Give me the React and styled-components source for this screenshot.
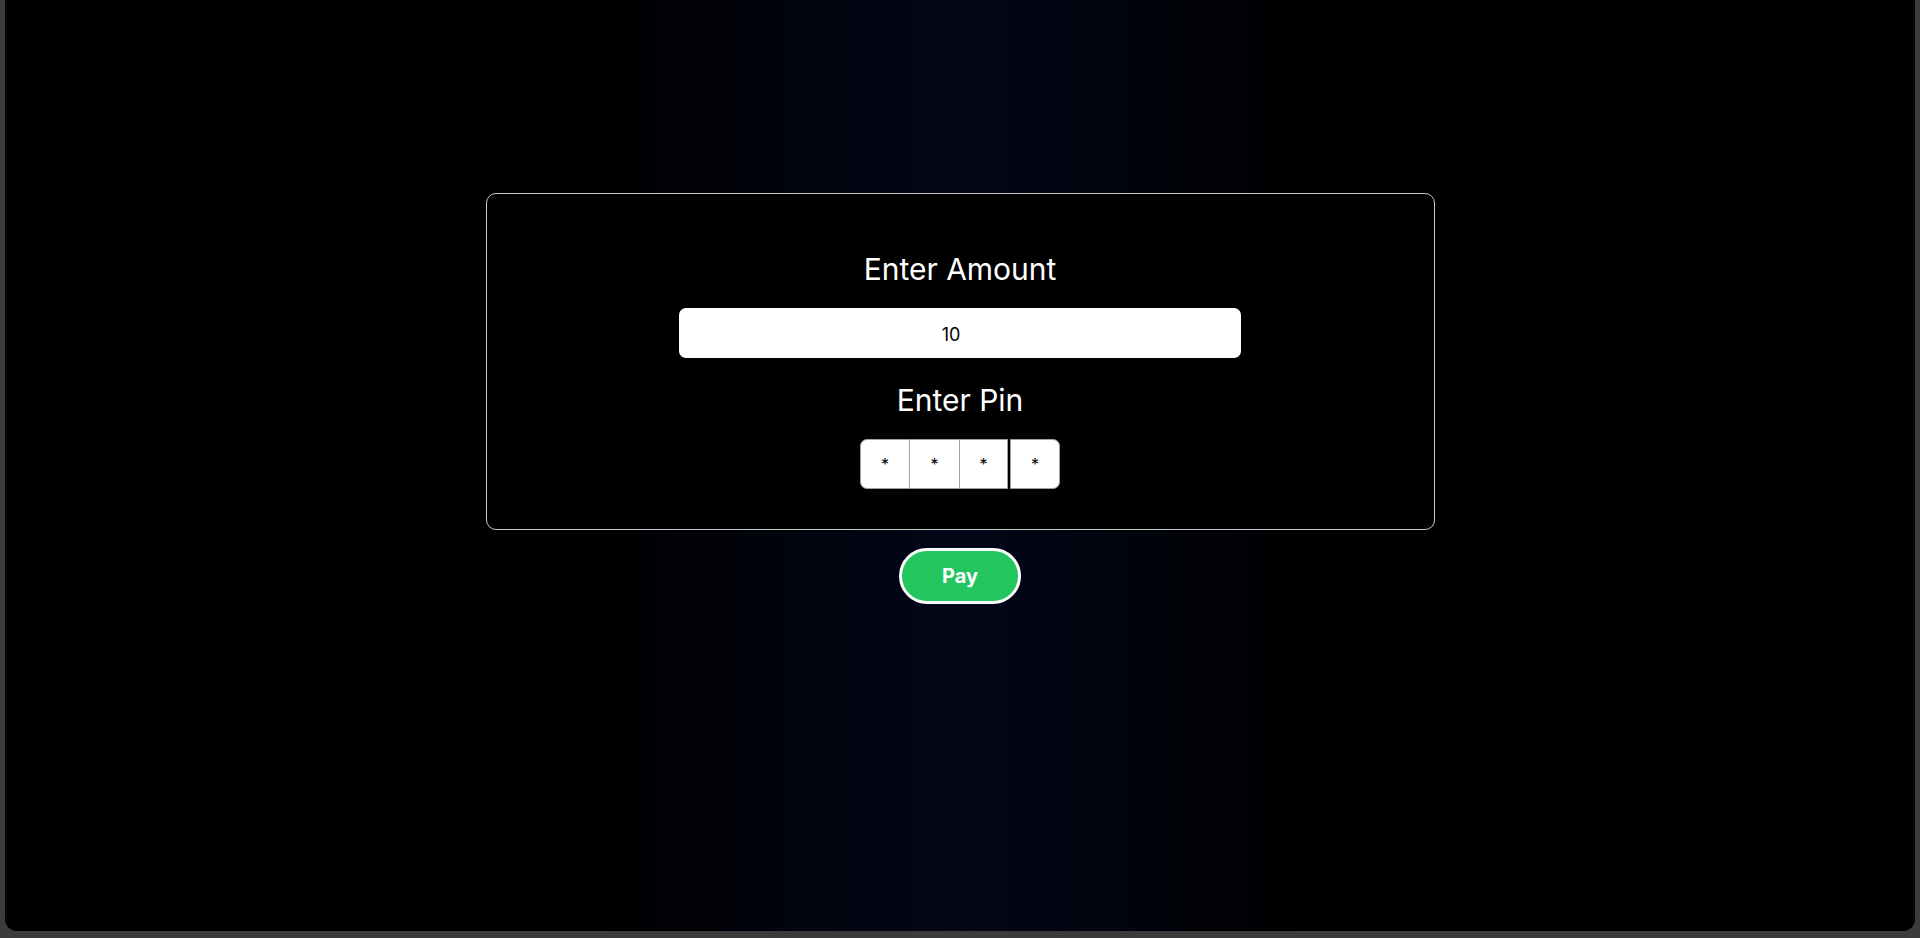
import styled, { createGlobalStyle } from "styled-components";

const Global = createGlobalStyle`
  html, body {
    margin: 0;
    padding: 0;
    background: #3b3b3b;
    font-family: Inter, "Noto Sans", sans-serif;
  }
  * {
    box-sizing: border-box;
  }
`;

const Frame = styled.div`
  width: 100%;
  height: 938px;
  padding: 0 5px 7px 5px;
`;

const Screen = styled.div`
  height: 100%;
  border-radius: 0 0 12px 12px;
  background: linear-gradient(
    to right,
    #000000 0%,
    #000000 30%,
    #020617 50%,
    #000000 69%,
    #000000 100%
  );
  display: flex;
  flex-direction: column;
  align-items: center;
  padding-top: 193px;
`;

const Card = styled.div`
  width: 949px;
  height: 337px;
  background: #000;
  border: 1px solid #c9c9c9;
  border-radius: 10px;
  display: flex;
  flex-direction: column;
  align-items: center;
  padding-top: 57px;
`;

const Label = styled.div`
  color: #fff;
  font-size: 30px;
  line-height: 36px;
  font-weight: 400;
  margin-top: ${(p) => p.$top || 0}px;
`;

const AmountInput = styled.input`
  width: 562px;
  height: 50px;
  margin-top: 21px;
  border: none;
  border-radius: 7px;
  background: #fff;
  color: #000;
  font-family: Inter, "Noto Sans", sans-serif;
  font-size: 18px;
  text-align: center;
  outline: none;
  padding: 2px 18px 0 0;
`;

const PinRow = styled.div`
  display: flex;
  margin-top: 21px;
`;

const PinBox = styled.input`
  width: ${(p) => p.$w}px;
  height: 50px;
  border: 1px solid #9ca3af;
  border-left-width: ${(p) => (p.$first ? 1 : 0)}px;
  border-radius: ${(p) =>
    p.$first ? "7px 0 0 7px" : p.$last ? "0 7px 7px 0" : "0"};
  margin-left: ${(p) => (p.$last ? 2 : 0)}px;
  background: #fff;
  color: #000;
  font-family: Inter, "Noto Sans", sans-serif;
  font-size: 16px;
  text-align: center;
  outline: none;
  padding: 0;
  ${(p) => p.$last && "border-left-width: 1px;"}
`;

const PayButton = styled.button`
  margin-top: 18px;
  width: 122px;
  height: 56px;
  border: 3px solid #fff;
  border-radius: 999px;
  background: #22c55e;
  color: #fff;
  font-family: Inter, "Noto Sans", sans-serif;
  font-size: 20px;
  font-weight: 700;
  cursor: pointer;
`;

const pins = [
  { w: 50, first: true },
  { w: 50 },
  { w: 48 },
  { w: 50, last: true },
];

export default function App() {
  return (
    <>
      <Global />
      <Frame>
        <Screen>
          <Card>
            <Label>Enter Amount</Label>
            <AmountInput defaultValue="10" />
            <Label $top={24}>Enter Pin</Label>
            <PinRow>
              {pins.map((p, i) => (
                <PinBox
                  key={i}
                  $w={p.w}
                  $first={p.first}
                  $last={p.last}
                  defaultValue="*"
                  maxLength={1}
                />
              ))}
            </PinRow>
          </Card>
          <PayButton>Pay</PayButton>
        </Screen>
      </Frame>
    </>
  );
}
